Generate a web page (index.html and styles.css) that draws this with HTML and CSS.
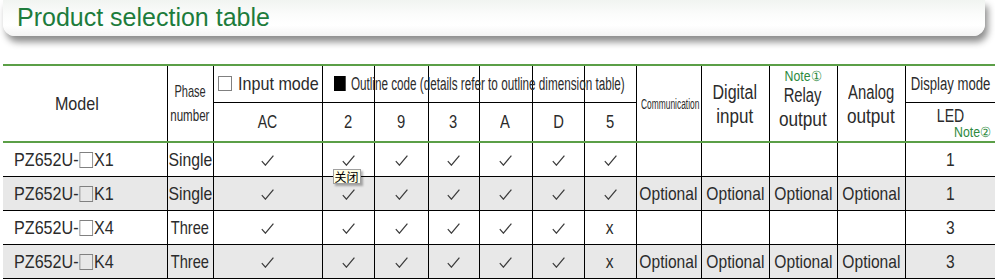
FILE: index.html
```html
<!DOCTYPE html>
<html lang="en">
<head>
<meta charset="utf-8">
<title>Product selection table</title>
<link rel="stylesheet" href="styles.css">
</head>
<body>
<div class="banner"><h1 class="title">Product selection table</h1></div>
<div class="wrap">
<table class="sel">
<colgroup>
<col class="c-model"><col class="c-phase"><col class="c-ac">
<col class="c-2"><col class="c-9"><col class="c-3"><col class="c-a"><col class="c-d"><col class="c-5">
<col class="c-comm"><col class="c-dig"><col class="c-rel"><col class="c-ana"><col class="c-disp">
</colgroup>
<thead>
<tr class="h1">
<th rowspan="2" class="model-h"><span class="t s85">Model</span></th>
<th rowspan="2" class="phase-h"><span class="ln"><span class="t s65">Phase</span></span><span class="ln"><span class="t s68">number</span></span></th>
<th class="im"><span class="wbox"></span><span class="tl s85">Input mode</span></th>
<th class="oc"><span class="oct"><span class="bbox"></span>Outline code (details refer to outline dimension table)</span></th>
<th></th><th></th><th></th><th></th><th></th>
<th rowspan="2" class="comm"><span class="commt">Communication</span></th>
<th rowspan="2" class="two"><span class="ln"><span class="t s80">Digital</span></span><span class="ln"><span class="t s85">input</span></span></th>
<th rowspan="2" class="two relay"><span class="ln note n1"><span class="t s88">Note①</span></span><span class="ln"><span class="t s74">Relay</span></span><span class="ln"><span class="t s86">output</span></span></th>
<th rowspan="2" class="two"><span class="ln"><span class="t s74">Analog</span></span><span class="ln"><span class="t s86">output</span></span></th>
<th class="disp"><span class="t s73">Display mode</span></th>
</tr>
<tr class="h2">
<th><span class="t s78">AC</span></th>
<th><span class="t">2</span></th><th><span class="t">9</span></th><th><span class="t">3</span></th>
<th><span class="t">A</span></th><th><span class="t">D</span></th><th><span class="t">5</span></th>
<th class="led"><span class="ledt"><span class="t s74">LED</span></span><span class="n2 note"><span class="tr s88">Note②</span></span></th>
</tr>
</thead>
<tbody>
<tr>
<td class="model"><span class="tl s85">PZ652U-<span class="mbox"></span>X1</span></td>
<td class="ph"><span class="t s83">Single</span></td>
<td><svg class="ck" viewBox="0 0 13 11"><path d="M0.8 6.2 L4.4 10.2 L12.4 0.6"/></svg></td>
<td class="tip-host"><svg class="ck" viewBox="0 0 13 11"><path d="M0.8 6.2 L4.4 10.2 L12.4 0.6"/></svg><span class="tip">关闭</span></td>
<td><svg class="ck" viewBox="0 0 13 11"><path d="M0.8 6.2 L4.4 10.2 L12.4 0.6"/></svg></td>
<td><svg class="ck" viewBox="0 0 13 11"><path d="M0.8 6.2 L4.4 10.2 L12.4 0.6"/></svg></td>
<td><svg class="ck" viewBox="0 0 13 11"><path d="M0.8 6.2 L4.4 10.2 L12.4 0.6"/></svg></td>
<td><svg class="ck" viewBox="0 0 13 11"><path d="M0.8 6.2 L4.4 10.2 L12.4 0.6"/></svg></td>
<td><svg class="ck" viewBox="0 0 13 11"><path d="M0.8 6.2 L4.4 10.2 L12.4 0.6"/></svg></td>
<td></td><td></td><td></td><td></td>
<td><span class="t">1</span></td>
</tr>
<tr class="alt">
<td class="model"><span class="tl s85">PZ652U-<span class="mbox"></span>K1</span></td>
<td class="ph"><span class="t s83">Single</span></td>
<td><svg class="ck" viewBox="0 0 13 11"><path d="M0.8 6.2 L4.4 10.2 L12.4 0.6"/></svg></td>
<td><svg class="ck" viewBox="0 0 13 11"><path d="M0.8 6.2 L4.4 10.2 L12.4 0.6"/></svg></td>
<td><svg class="ck" viewBox="0 0 13 11"><path d="M0.8 6.2 L4.4 10.2 L12.4 0.6"/></svg></td>
<td><svg class="ck" viewBox="0 0 13 11"><path d="M0.8 6.2 L4.4 10.2 L12.4 0.6"/></svg></td>
<td><svg class="ck" viewBox="0 0 13 11"><path d="M0.8 6.2 L4.4 10.2 L12.4 0.6"/></svg></td>
<td><svg class="ck" viewBox="0 0 13 11"><path d="M0.8 6.2 L4.4 10.2 L12.4 0.6"/></svg></td>
<td><svg class="ck" viewBox="0 0 13 11"><path d="M0.8 6.2 L4.4 10.2 L12.4 0.6"/></svg></td>
<td><span class="t s82">Optional</span></td><td><span class="t s82">Optional</span></td>
<td><span class="t s82">Optional</span></td><td><span class="t s82">Optional</span></td>
<td><span class="t">1</span></td>
</tr>
<tr>
<td class="model"><span class="tl s85">PZ652U-<span class="mbox"></span>X4</span></td>
<td class="ph"><span class="t s77">Three</span></td>
<td><svg class="ck" viewBox="0 0 13 11"><path d="M0.8 6.2 L4.4 10.2 L12.4 0.6"/></svg></td>
<td><svg class="ck" viewBox="0 0 13 11"><path d="M0.8 6.2 L4.4 10.2 L12.4 0.6"/></svg></td>
<td><svg class="ck" viewBox="0 0 13 11"><path d="M0.8 6.2 L4.4 10.2 L12.4 0.6"/></svg></td>
<td><svg class="ck" viewBox="0 0 13 11"><path d="M0.8 6.2 L4.4 10.2 L12.4 0.6"/></svg></td>
<td><svg class="ck" viewBox="0 0 13 11"><path d="M0.8 6.2 L4.4 10.2 L12.4 0.6"/></svg></td>
<td><svg class="ck" viewBox="0 0 13 11"><path d="M0.8 6.2 L4.4 10.2 L12.4 0.6"/></svg></td>
<td class="x"><span class="t">x</span></td>
<td></td><td></td><td></td><td></td>
<td><span class="t">3</span></td>
</tr>
<tr class="alt">
<td class="model"><span class="tl s85">PZ652U-<span class="mbox"></span>K4</span></td>
<td class="ph"><span class="t s77">Three</span></td>
<td><svg class="ck" viewBox="0 0 13 11"><path d="M0.8 6.2 L4.4 10.2 L12.4 0.6"/></svg></td>
<td><svg class="ck" viewBox="0 0 13 11"><path d="M0.8 6.2 L4.4 10.2 L12.4 0.6"/></svg></td>
<td><svg class="ck" viewBox="0 0 13 11"><path d="M0.8 6.2 L4.4 10.2 L12.4 0.6"/></svg></td>
<td><svg class="ck" viewBox="0 0 13 11"><path d="M0.8 6.2 L4.4 10.2 L12.4 0.6"/></svg></td>
<td><svg class="ck" viewBox="0 0 13 11"><path d="M0.8 6.2 L4.4 10.2 L12.4 0.6"/></svg></td>
<td><svg class="ck" viewBox="0 0 13 11"><path d="M0.8 6.2 L4.4 10.2 L12.4 0.6"/></svg></td>
<td class="x"><span class="t">x</span></td>
<td><span class="t s82">Optional</span></td><td><span class="t s82">Optional</span></td>
<td><span class="t s82">Optional</span></td><td><span class="t s82">Optional</span></td>
<td><span class="t">3</span></td>
</tr>
</tbody>
</table>
</div>
</body>
</html>
```

FILE: styles.css
```css
html, body {
  margin: 0;
  padding: 0;
  background: #fff;
  overflow: hidden;
}

body {
  font-family: "Liberation Sans", Arial, sans-serif;
  color: #2b2b2b;
}

.banner {
  margin: 0 10px 0 3px;
  height: 36px;
  border-radius: 0 0 12px 12px;
  background: linear-gradient(to bottom, #f1f4f1 0%, #fbfcfb 40%, #ffffff 70%, #f3f3f3 100%);
  box-shadow: 3px 6px 7px rgba(0, 0, 0, 0.45);
}

.title {
  margin: 0;
  padding-left: 14px;
  font-weight: normal;
  font-size: 25px;
  line-height: 35px;
  color: #1d7c3c;
}

.wrap {
  padding: 28px 0 0 3px;
}

/* condensed text helpers (no narrow font installed) */
.t {
  display: inline-block;
  margin: 0 -30px;
  transform: scaleX(0.82);
}

.tl {
  display: inline-block;
  transform: scaleX(0.82);
  transform-origin: left center;
}

.tr {
  display: inline-block;
  transform: scaleX(0.82);
  transform-origin: right center;
}

.s65 { transform: scaleX(0.65); }
.s68 { transform: scaleX(0.68); }
.s73 { transform: scaleX(0.73); }
.s74 { transform: scaleX(0.74); }
.s77 { transform: scaleX(0.77); }
.s78 { transform: scaleX(0.78); }
.s80 { transform: scaleX(0.80); }
.s82 { transform: scaleX(0.82); }
.s83 { transform: scaleX(0.83); }
.s85 { transform: scaleX(0.85); }
.s86 { transform: scaleX(0.86); }
.s88 { transform: scaleX(0.88); }

.sel {
  table-layout: fixed;
  border-collapse: collapse;
  width: 992px;
  border-top: 2px solid #5b9f47;
}

.c-model { width: 164px; }
.c-phase { width: 46px; }
.c-ac { width: 109px; }
.c-2 { width: 52px; }
.c-9 { width: 54px; }
.c-3 { width: 51px; }
.c-a { width: 53px; }
.c-d { width: 52px; }
.c-5 { width: 52px; }
.c-comm { width: 65px; }
.c-dig { width: 68px; }
.c-rel { width: 68px; }
.c-ana { width: 68px; }
.c-disp { width: 90px; }

.sel th, .sel td {
  border-left: 1px solid #000;
  border-right: 1px solid #000;
  padding: 0;
  text-align: center;
  vertical-align: middle;
  white-space: nowrap;
  font-weight: normal;
  color: #2b2b2b;
}

.sel th:first-child, .sel td:first-child {
  border-left: none;
}

.sel th:last-child, .sel td:last-child {
  border-right: none;
}

.sel thead tr.h1 th {
  height: 36px;
  font-size: 18px;
}

.sel thead tr.h2 th {
  height: 35px;
  font-size: 18px;
  border-top: 1px solid #000;
  border-bottom: 2px solid #5b9f47;
}

.sel thead th[rowspan] {
  border-bottom: 2px solid #5b9f47;
}

.ln {
  display: block;
}

.model-h {
  font-size: 19px !important;
  padding-right: 16px !important;
}

.phase-h {
  font-size: 17px !important;
  line-height: 24px;
}

.im {
  text-align: left !important;
  padding-left: 4px !important;
  font-size: 19px !important;
}

.wbox {
  display: inline-block;
  width: 12px;
  height: 13px;
  border: 1.5px solid #808080;
  vertical-align: -1px;
  margin-right: 6px;
}

.oc {
  text-align: left !important;
  overflow: visible;
  padding-left: 11px !important;
}

.oct {
  display: inline-block;
  font-size: 18px;
  transform: scaleX(0.65);
  transform-origin: left center;
}

.bbox {
  display: inline-block;
  width: 18px;
  height: 15px;
  background: #000;
  vertical-align: -1px;
  margin-right: 8px;
}

.comm {
  text-align: left !important;
  padding-left: 4px !important;
  overflow: visible;
}

.commt {
  display: inline-block;
  font-size: 14px;
  transform: scaleX(0.6);
  transform-origin: left center;
}

.two {
  font-size: 20px !important;
  line-height: 24px;
}

.relay {
  vertical-align: top !important;
  padding-top: 3px !important;
}

.note {
  color: #2d8a3e;
  font-size: 14px;
  line-height: 14px;
}

.disp {
  font-size: 18px !important;
}

.led {
  vertical-align: top !important;
  padding-top: 3px !important;
}

.ledt {
  display: block;
  text-align: center;
  line-height: 19px;
  font-size: 19px;
}

.n2 {
  display: block;
  padding-right: 3px;
  text-align: right;
}

.sel tbody td {
  font-size: 19px;
  border-bottom: 1px solid #000;
  height: 33px;
}

.sel tbody tr.alt td {
  background: #e8e8e8;
}

.sel tbody td.model {
  text-align: left;
  padding-left: 11px;
}

.mbox {
  display: inline-block;
  width: 14px;
  height: 14px;
  border: 1.5px solid #808080;
  vertical-align: -2px;
  margin: 0 1px;
}

.ck {
  width: 13px;
  height: 11px;
  display: inline-block;
  vertical-align: middle;
  fill: none;
  stroke: #3a3a3a;
  stroke-width: 1.2;
}

.x {
  font-size: 18px;
}

.tip-host {
  position: relative;
}

.tip {
  position: absolute;
  left: 10px;
  top: 26px;
  padding: 0 1px;
  font-family: "Noto Sans CJK SC", sans-serif;
  font-size: 12px;
  line-height: 13px;
  color: #000;
  background: #ffffe6;
  border: 1px solid #a0a0a0;
  box-shadow: 2px 2px 2px rgba(0, 0, 0, 0.3);
  z-index: 2;
}
```
